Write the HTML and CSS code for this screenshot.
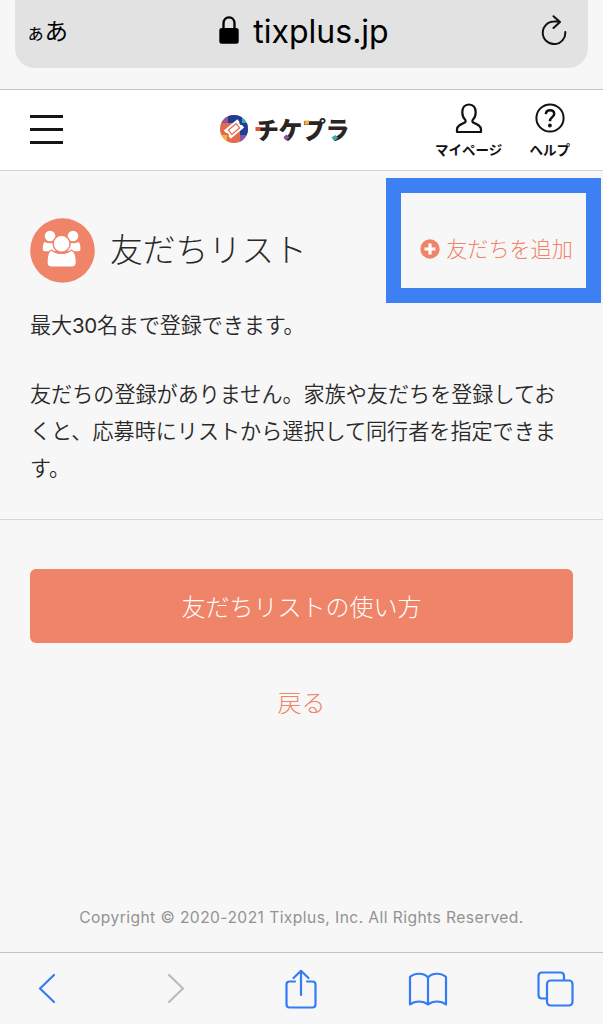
FILE: index.html
```html
<!DOCTYPE html>
<html lang="ja">
<head>
<meta charset="utf-8">
<title>友だちリスト</title>
<link rel="stylesheet" href="styles.css">
</head>
<body>
<div class="browser-top">
  <div class="address-bar">
    <span class="text-size"><small>ぁ</small>あ</span>
    <span class="domain">
      <svg class="lock" width="20" height="28" viewBox="0 0 20 28"><path d="M4.500 13V7.500C4.500 3.800 6.800 1.400 10 1.400s5.500 2.400 5.500 6.100V13" fill="none" stroke="#000" stroke-width="2.300"/><rect x=".3" y="12" width="19.400" height="15.800" rx="2.500"/></svg>
      <span class="domain-name">tixplus.jp</span>
    </span>
    <svg class="reload" width="26" height="30" viewBox="0 0 26 30" fill="none" stroke="#111" stroke-width="2" stroke-linecap="round" stroke-linejoin="round"><path d="M24.300 17A11.300 11.300 0 1 1 13 6.500C15 6.300 17 6.500 18.800 6.800M12.500 1.200L19 7 12.500 13"/></svg>
  </div>
</div>

<header class="site-header">
  <button class="menu" aria-label="メニュー"><i></i><i></i><i></i></button>
  <div class="logo">
    <svg class="logo-mark" width="28" height="28" viewBox="0 0 28 28">
      <defs><clipPath id="disc"><circle cx="14" cy="14" r="14"/></clipPath></defs>
      <g clip-path="url(#disc)">
        <rect width="28" height="28" fill="#e26b4d"/>
        <path d="M8 0h14v8H8z" fill="#1f3d94"/>
        <path d="M0 0h8v8H0z" fill="#8b55a2"/>
        <path d="M22 3h6v6h-6z" fill="#35aebb"/>
        <path d="M20 8h8v13h-8z" fill="#1f3d94"/>
        <path d="M20 20h8v8h-8z" fill="#8b55a2"/>
        <path d="M0 20h7v8H0z" fill="#f2b63c"/>
      </g>
      <g transform="rotate(-40 14 14)"><path d="M5.200 8.700h17.600v3.300a2.100 2.100 0 0 0 0 4v3.300H5.200V16a2.100 2.100 0 0 0 0-4z" fill="#fff"/><rect x="9" y="11.200" width="10" height="5.600" fill="#fff" stroke="#e26b4d" stroke-width="1.200"/></g>
    </svg>
    <span class="logo-name">チケプラ
      <svg class="logo-accents" width="94" height="28" viewBox="0 0 94 28"><path d="M.5 12h5v4h-5z" fill="#e65332"/><path d="M28.500 22l3-2.500 3 3-3.500 3z" fill="#8750a5"/><path d="M49.500 5.500H54v4.200h-4.500z" fill="#edb136"/><path d="M77 22l3.500-2 2.500 3-3.500 3z" fill="#37afb5"/></svg>
    </span>
  </div>
  <nav class="header-nav">
    <a class="mypage"><svg width="28" height="31" viewBox="0 0 28 31" fill="none" stroke="#111" stroke-width="2.200" stroke-linejoin="round"><path d="M14 1.500C9.500 1.500 7.300 4.700 7.300 9.200c0 3.300 1.100 5.700 2.700 7.300 1 1 .8 2.600-.6 3.300C5.500 21.500 2 23 2 26.500V29h24v-2.500c0-3.500-3.500-5-7.400-6.700-1.400-.7-1.600-2.300-.6-3.300 1.600-1.600 2.700-4 2.700-7.300 0-4.500-2.200-7.700-6.700-7.700z"/></svg><span>マイページ</span></a>
    <a class="help"><svg width="30" height="30" viewBox="0 0 30 30" fill="none" stroke="#111" stroke-width="2"><circle cx="15" cy="15" r="13.600"/><path d="M10.800 11.200C11 8.500 12.600 7.200 15 7.200c2.500 0 4.200 1.500 4.200 3.700 0 3.300-4.300 3.300-4.300 7.300" stroke-width="2.500"/><circle cx="14.900" cy="22.500" r="1.900" fill="#111" stroke="none"/></svg><span>ヘルプ</span></a>
  </nav>
</header>

<main>
  <section class="friends">
    <div class="title-row">
      <svg class="friends-icon" width="65" height="65" viewBox="0 0 65 65"><circle cx="32.500" cy="32.500" r="32.300" fill="#ef8469"/>
        <g fill="#fff"><circle cx="20" cy="18" r="5.300"/><circle cx="43" cy="18" r="5.300"/>
        <path d="M14.500 24c3.500 1.600 7.500 1.600 11 0v9.200H14.800c-1.300 0-2-.8-2-2 0-3 .2-5.700 1.700-7.200zM48.700 24c-3.500 1.600-7.500 1.600-11 0v9.200h10.700c1.300 0 2-.8 2-2 0-3-.2-5.700-1.700-7.200z"/>
        <path d="M22 32.200c5 4.400 14 4.400 19 0 4 .8 5.300 5 5.300 12 0 3.200-1.500 4.800-4.500 4.800H21.500c-3 0-4.500-1.600-4.500-4.800C17 37.200 18 33 22 32.200z" stroke="#ef8469" stroke-width="1.200"/>
        <circle cx="31.600" cy="25.800" r="8.500" stroke="#ef8469" stroke-width="1.500"/></g></svg>
      <h1>友だちリスト</h1>
      <a class="add-friend"><svg width="20" height="20" viewBox="0 0 20 20"><circle cx="10" cy="10" r="9.700" fill="#ef8469"/><path d="M10 4.500v11M4.500 10h11" stroke="#fff" stroke-width="3.200"/></svg><span>友だちを追加</span></a>
    </div>
    <p class="limit">最大<span class="number">30</span>名まで登録できます。</p>
    <p class="empty">友だちの登録がありません。家族や友だちを登録しておくと、応募時にリストから選択して同行者を指定できます。</p>
  </section>
  <section class="actions">
    <a class="usage">友だちリストの使い方</a>
    <a class="back">戻る</a>
  </section>
  <footer><span>Copyright © 2020-2021 Tixplus, Inc. All Rights Reserved.</span></footer>
</main>

<nav class="browser-bottom">
  <svg width="18" height="31" viewBox="0 0 18 31"><path d="M16 2L2 15.500 16 29"/></svg>
  <svg class="disabled" width="18" height="31" viewBox="0 0 18 31"><path d="M2 2l14 13.500L2 29"/></svg>
  <svg width="32" height="40" viewBox="0 0 32 40"><path d="M10 12.500H4.500Q1.500 12.500 1.500 15.500v20q0 3 3 3h23q3 0 3-3v-20q0-3-3-3H22M16 26V2M8.500 9L16 1.800 23.500 9"/></svg>
  <svg width="40" height="34" viewBox="0 0 40 34"><path d="M20 5.500C16 .6 6.500.6 2 5v27.500c5-4 13-4 18 0 5-4 13-4 18 0V5C33.500.6 24 .6 20 5.500zm0 0v27"/></svg>
  <svg width="37" height="36" viewBox="0 0 37 36"><path d="M10 27.500H5Q1.500 27.500 1.500 24V5Q1.500 1.500 5 1.500h18.500Q27 1.500 27 5v4"/><rect x="10" y="9.500" width="25.500" height="25" rx="3.500"/></svg>
</nav>
</body>
</html>
```
FILE: styles.css
```css
* { box-sizing: border-box; }
body {
  margin: 0;
  height: 1024px;
  display: flex;
  flex-direction: column;
  overflow: hidden;
  background: #f7f7f7;
  color: #292929;
  font-family: "Noto Sans CJK JP", sans-serif;
}
svg { display: block; flex: none; }
h1, p { margin: 0; font-weight: 300; }

.browser-top { height: 90px; padding: 0 15px; border-bottom: 1px solid #c3c3c3; }
.address-bar {
  height: 68px;
  display: grid;
  grid-template-columns: 100px 1fr 100px;
  align-items: start;
  background: #e2e2e2;
  border-radius: 0 0 20px 20px;
  color: #000;
}
.text-size { padding: 14px 0 0 11px; font-size: 23.500px; line-height: 32px; white-space: nowrap; }
.text-size small { font-size: 19px; letter-spacing: -0.500px; }
.domain { display: flex; justify-content: center; gap: 14px; padding: 13px 0 0 5px; }
.lock { margin-top: 3px; }
.domain-name { font-family: Inter, sans-serif; font-size: 32px; line-height: 38px; letter-spacing: 0; }
.reload { justify-self: end; margin: 15px 21px 0 0; }

.site-header {
  height: 81px;
  display: grid;
  grid-template-columns: 190px 1fr 135px;
  align-items: start;
  padding: 0 33px 0 30px;
  background: #fff;
  border-bottom: 1px solid #d2d2d2;
}
.menu {
  width: 33px;
  margin-top: 25px;
  padding: 0;
  border: 0;
  background: none;
  display: grid;
  gap: 10px;
}
.menu i { height: 3px; background: #151515; }
.logo { display: flex; gap: 7px; padding-top: 25px; }
.logo-name {
  position: relative;
  font-size: 24px;
  font-weight: 900;
  line-height: 28px;
  letter-spacing: -0.500px;
  white-space: nowrap;
  color: #2a2424;
}
.logo-accents { position: absolute; left: 0; top: 0; }
.header-nav { display: flex; justify-content: space-between; }
.header-nav a { display: flex; flex-direction: column; align-items: center; padding-top: 13px; gap: 6px; }
.header-nav .mypage { gap: 5px; }
.header-nav span { font-size: 13.500px; font-weight: 700; line-height: 20px; white-space: nowrap; color: #111; }

main { height: 781px; display: flex; flex-direction: column; }
.friends { height: 349px; padding: 7px 2px 0 30px; border-bottom: 1px solid #d7d7d7; }
.title-row { height: 125px; display: flex; align-items: flex-start; }
.friends-icon { margin-top: 40px; }
h1 { margin: 46px 0 0 15px; font-size: 32.800px; line-height: 48px; font-weight: 300; white-space: nowrap; }
.add-friend {
  width: 215px;
  height: 125px;
  margin-left: auto;
  border: 15px solid #3d80f4;
  display: flex;
  justify-content: center;
  align-items: center;
  gap: 6px;
  padding: 16px 0 0 6px;
  color: #ef8469;
  font-size: 21.100px;
  font-weight: 300;
  line-height: 32px;
  white-space: nowrap;
}
.add-friend span { padding-bottom: 2px; }
.limit, .empty { font-size: 21.100px; line-height: 37px; font-weight: 350; }
.number { font-family: Inter, sans-serif; font-weight: 400; font-size: 20.500px; letter-spacing: -0.300px; }
.limit { margin-top: 3px; letter-spacing: -0.120px; }
.empty { width: 530px; margin-top: 31px; }
.actions { height: 360px; padding: 49px 30px 0; display: flex; flex-direction: column; gap: 39px; text-align: center; font-weight: 300; }
.usage { height: 74px; border-radius: 6px; background: #ef8469; color: #fff; font-size: 24px; line-height: 73px; }
.back { color: #ef8469; font-size: 24px; line-height: 40px; }
footer { padding-top: 26px; text-align: center; font-family: Inter, sans-serif; font-size: 15.600px; line-height: 24px; letter-spacing: 0.430px; color: #929292; white-space: nowrap; }

.browser-bottom {
  height: 72px;
  display: grid;
  grid-template-columns: 129px 118px 123px 129px 37px;
  align-items: center;
  padding: 0 29px 0 38px;
  border-top: 1px solid #c2c2c2;
  fill: none;
  stroke: #347bf6;
  stroke-width: 2.200;
  stroke-linecap: round;
  stroke-linejoin: round;
}
.disabled { stroke: #bbb; }
```
